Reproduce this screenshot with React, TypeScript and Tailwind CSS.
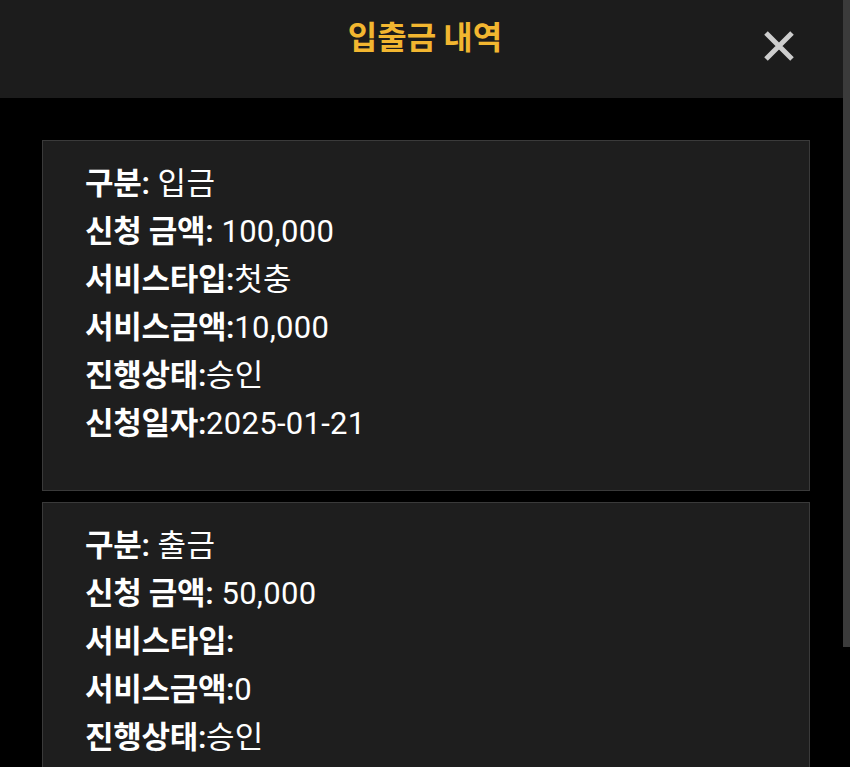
import React from "react";

type Row = { label: string; value: string };

const cards: Row[][] = [
  [
    { label: "구분:", value: " 입금" },
    { label: "신청 금액:", value: " 100,000" },
    { label: "서비스타입:", value: "첫충" },
    { label: "서비스금액:", value: "10,000" },
    { label: "진행상태:", value: "승인" },
    { label: "신청일자:", value: "2025-01-21" },
  ],
  [
    { label: "구분:", value: " 출금" },
    { label: "신청 금액:", value: " 50,000" },
    { label: "서비스타입:", value: "" },
    { label: "서비스금액:", value: "0" },
    { label: "진행상태:", value: "승인" },
    { label: "신청일자:", value: "2025-01-21" },
  ],
];

export default function App() {
  return (
    <div
      className="relative h-[767px] w-[850px] overflow-hidden bg-black"
      style={{ fontFamily: 'Roboto, "Noto Sans CJK KR", sans-serif' }}
    >
      <header className="relative flex h-[98px] items-start justify-center bg-[#1c1c1c]">
        <h1
          className="mt-[13px] text-[32px] font-bold leading-[44px] text-[#f2b630]"
          style={{ fontFamily: '"Noto Sans CJK KR", sans-serif' }}
        >
          입출금 내역
        </h1>
        <button className="absolute left-[763px] top-[30px] h-[32px] w-[32px]">
          <svg viewBox="0 0 32 32" className="h-[32px] w-[32px]">
            <path
              d="M3 3 L29 29 M29 3 L3 29"
              stroke="#cdcdcd"
              strokeWidth="5"
              strokeLinecap="butt"
            />
          </svg>
        </button>
      </header>
      <main className="flex flex-col gap-[11px] pl-[42px] pt-[42px]">
        {cards.map((rows, i) => (
          <div
            key={i}
            className="w-[768px] border border-[#3a3a3a] bg-[#1e1e1e] pb-[42px] pl-[42px] pt-[19px] text-white"
          >
            {rows.map((r, j) => (
              <div key={j} className="whitespace-pre text-[31px] leading-[48px]">
                <span className="font-semibold tracking-[-0.3px]">{r.label}</span>
                <span className="tracking-[0.3px]">{r.value}</span>
              </div>
            ))}
          </div>
        ))}
      </main>
      <div className="absolute right-0 top-0 h-[647px] w-[7px] bg-[#3b3b3b]" />
    </div>
  );
}
